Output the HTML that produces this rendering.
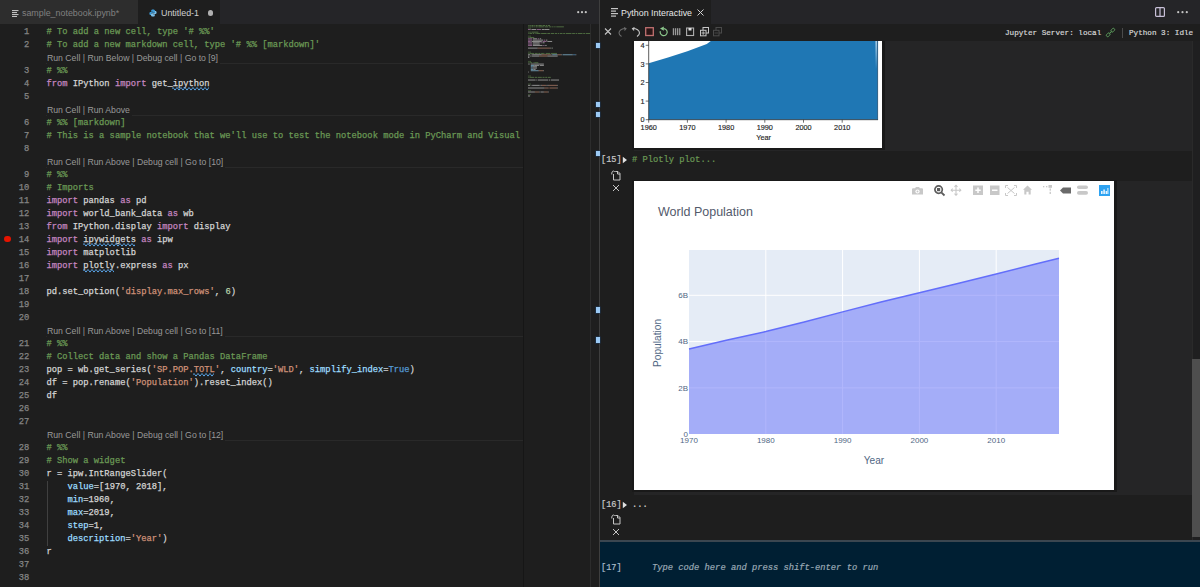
<!DOCTYPE html>
<html><head><meta charset="utf-8">
<style>
*{margin:0;padding:0;box-sizing:border-box}
html,body{width:1200px;height:587px;overflow:hidden;background:#1e1e1e;font-family:"Liberation Sans",sans-serif}
.abs{position:absolute}
.mono{font-family:"Liberation Mono",monospace;-webkit-text-stroke:0.2px currentColor}
/* left editor */
#ltabs{left:0;top:0;width:600px;height:24px;background:#252528}
#tab1{left:0;top:0;width:138px;height:24px;background:#2d2d2d}
#tab2{left:138px;top:0;width:82px;height:24px;background:#1e1e1e}
.tabtxt{font-size:8.9px;line-height:26px;white-space:nowrap}
#editor{left:0;top:24px;width:599px;height:563px;background:#1e1e1e}
.ln{position:absolute;left:0;width:29.2px;text-align:right;color:#858585;font-family:"Liberation Mono",monospace;font-size:8.77px;line-height:13px;height:13px;-webkit-text-stroke:0.25px currentColor}
.cl{position:absolute;left:46.5px;white-space:pre;color:#d4d4d4;font-family:"Liberation Mono",monospace;font-size:8.77px;line-height:13px;height:13px;-webkit-text-stroke:0.25px currentColor}
.lens{position:absolute;left:47px;background:#1e1e1e;padding-right:2px;white-space:pre;color:#999;font-size:8.7px;line-height:13px;height:13px}
.sep{position:absolute;left:46px;width:477px;height:1px;background:#292929}
.c{color:#6a9955}.k{color:#c586c0}.s{color:#ce9178}.n{color:#b5cea8}.p{color:#9cdcfe}.b{color:#569cd6}
/* right */
#rtabs{left:600px;top:0;width:600px;height:24px;background:#252528}
#rtab{left:600px;top:0;width:111px;height:24px;background:#1e1e1e}
#rtool{left:600px;top:24px;width:600px;height:17px;background:#1e1e1e}
#divider{left:599px;top:0;width:1px;height:587px;background:#3e3e3e}
</style></head><body>
<!-- LEFT TAB BAR -->
<div id="ltabs" class="abs"></div>
<div id="tab1" class="abs">
  <svg class="abs" style="left:12px;top:9.5px" width="7" height="7" viewBox="0 0 7 7"><g fill="#c0c0c0"><rect x="0" y="0" width="6.5" height="1.1"/><rect x="0" y="2" width="5" height="1.1"/><rect x="0" y="4" width="6.5" height="1.1"/><rect x="0" y="6" width="5" height="1"/></g></svg>
  <div class="abs tabtxt" style="left:22px;top:0;color:#808080">sample_notebook.ipynb*</div>
</div>
<div id="tab2" class="abs">
  <svg class="abs" style="left:11px;top:9px" width="8" height="8" viewBox="0 0 9 10"><path d="M4.5 0.5 C2.5 0.5 2.2 1.3 2.2 2.2 V3.3 H4.6 V3.8 H1.3 C0.4 3.8 0 4.6 0 5.6 C0 6.8 0.5 7.5 1.3 7.5 H2.2 V6.4 C2.2 5.5 2.9 4.8 3.8 4.8 H5.8 C6.5 4.8 7 4.3 7 3.6 V2.2 C7 1.3 6.3 0.5 4.5 0.5Z" fill="#3c9ad6"/><path d="M4.5 9.5 C6.5 9.5 6.8 8.7 6.8 7.8 V6.7 H4.4 V6.2 H7.7 C8.6 6.2 9 5.4 9 4.4 C9 3.2 8.5 2.5 7.7 2.5 H6.8 V3.6 C6.8 4.5 6.1 5.2 5.2 5.2 H3.2 C2.5 5.2 2 5.7 2 6.4 V7.8 C2 8.7 2.7 9.5 4.5 9.5Z" fill="#7ec0e8"/></svg>
  <div class="abs tabtxt" style="left:23px;top:0;color:#cfcfcf">Untitled-1</div>
  <div class="abs" style="left:69.5px;top:10px;width:5.5px;height:5.5px;border-radius:50%;background:#b0b0b0"></div>
</div>
<div class="abs" style="left:577px;top:11px;width:10px;height:2px;">
  <svg width="10" height="3" style="position:absolute;top:0"><circle cx="1.2" cy="1.2" r="1.1" fill="#c5c5c5"/><circle cx="5" cy="1.2" r="1.1" fill="#c5c5c5"/><circle cx="8.8" cy="1.2" r="1.1" fill="#c5c5c5"/></svg>
</div>

<!-- EDITOR -->
<div id="editor" class="abs">
<div class="ln" style="top:2px">1</div>
<div class="cl" style="top:2px"><span class="c"># To add a new cell, type '# %%'</span></div>
<div class="ln" style="top:15px">2</div>
<div class="cl" style="top:15px"><span class="c"># To add a new markdown cell, type '# %% [markdown]'</span></div>
<div class="sep" style="top:39px"></div>
<div class="lens" style="top:28px">Run Cell | Run Below | Debug cell | Go to [9]</div>
<div class="ln" style="top:41px">3</div>
<div class="cl" style="top:41px"><span class="c"># %%</span></div>
<div class="ln" style="top:54px">4</div>
<div class="cl" style="top:54px"><span class="k">from</span> IPython <span class="k">import</span> get_ipython</div>
<svg class="abs" style="left:172.2px;top:62.5px" width="36.8" height="4" viewBox="0 0 36.8 4"><path d="M0 1.8 Q1.0 -0.8 2.0 1.8 T4.0 1.8 Q5.0 -0.8 6.0 1.8 T8.0 1.8 Q9.0 -0.8 10.0 1.8 T12.0 1.8 Q13.0 -0.8 14.0 1.8 T16.0 1.8 Q17.0 -0.8 18.0 1.8 T20.0 1.8 Q21.0 -0.8 22.0 1.8 T24.0 1.8 Q25.0 -0.8 26.0 1.8 T28.0 1.8 Q29.0 -0.8 30.0 1.8 T32.0 1.8 Q33.0 -0.8 34.0 1.8 T36.0 1.8 Q37.0 -0.8 38.0 1.8 T40.0 1.8" stroke="#5aa5e8" stroke-width="1" fill="none"/></svg>
<div class="ln" style="top:67px">5</div>
<div class="cl" style="top:67px"></div>
<div class="sep" style="top:91px"></div>
<div class="lens" style="top:80px">Run Cell | Run Above</div>
<div class="ln" style="top:93px">6</div>
<div class="cl" style="top:93px"><span class="c"># %% [markdown]</span></div>
<div class="ln" style="top:106px">7</div>
<div class="cl" style="top:106px"><span class="c"># This is a sample notebook that we'll use to test the notebook mode in PyCharm and Visual</span></div>
<div class="ln" style="top:119px">8</div>
<div class="cl" style="top:119px"></div>
<div class="sep" style="top:143px"></div>
<div class="lens" style="top:132px">Run Cell | Run Above | Debug cell | Go to [10]</div>
<div class="ln" style="top:145px">9</div>
<div class="cl" style="top:145px"><span class="c"># %%</span></div>
<div class="ln" style="top:158px">10</div>
<div class="cl" style="top:158px"><span class="c"># Imports</span></div>
<div class="ln" style="top:171px">11</div>
<div class="cl" style="top:171px"><span class="k">import</span> pandas <span class="k">as</span> pd</div>
<div class="ln" style="top:184px">12</div>
<div class="cl" style="top:184px"><span class="k">import</span> world_bank_data <span class="k">as</span> wb</div>
<div class="ln" style="top:197px">13</div>
<div class="cl" style="top:197px"><span class="k">from</span> IPython.display <span class="k">import</span> display</div>
<div class="ln" style="top:210px">14</div>
<div class="cl" style="top:210px"><span class="k">import</span> ipywidgets <span class="k">as</span> ipw</div>
<svg class="abs" style="left:82.8px;top:218.5px" width="52.6" height="4" viewBox="0 0 52.6 4"><path d="M0 1.8 Q1.0 -0.8 2.0 1.8 T4.0 1.8 Q5.0 -0.8 6.0 1.8 T8.0 1.8 Q9.0 -0.8 10.0 1.8 T12.0 1.8 Q13.0 -0.8 14.0 1.8 T16.0 1.8 Q17.0 -0.8 18.0 1.8 T20.0 1.8 Q21.0 -0.8 22.0 1.8 T24.0 1.8 Q25.0 -0.8 26.0 1.8 T28.0 1.8 Q29.0 -0.8 30.0 1.8 T32.0 1.8 Q33.0 -0.8 34.0 1.8 T36.0 1.8 Q37.0 -0.8 38.0 1.8 T40.0 1.8 Q41.0 -0.8 42.0 1.8 T44.0 1.8 Q45.0 -0.8 46.0 1.8 T48.0 1.8 Q49.0 -0.8 50.0 1.8 T52.0 1.8 Q53.0 -0.8 54.0 1.8 T56.0 1.8" stroke="#5aa5e8" stroke-width="1" fill="none"/></svg>
<div class="ln" style="top:223px">15</div>
<div class="cl" style="top:223px"><span class="k">import</span> matplotlib</div>
<div class="ln" style="top:236px">16</div>
<div class="cl" style="top:236px"><span class="k">import</span> plotly.express <span class="k">as</span> px</div>
<svg class="abs" style="left:82.8px;top:244.5px" width="31.6" height="4" viewBox="0 0 31.6 4"><path d="M0 1.8 Q1.0 -0.8 2.0 1.8 T4.0 1.8 Q5.0 -0.8 6.0 1.8 T8.0 1.8 Q9.0 -0.8 10.0 1.8 T12.0 1.8 Q13.0 -0.8 14.0 1.8 T16.0 1.8 Q17.0 -0.8 18.0 1.8 T20.0 1.8 Q21.0 -0.8 22.0 1.8 T24.0 1.8 Q25.0 -0.8 26.0 1.8 T28.0 1.8 Q29.0 -0.8 30.0 1.8 T32.0 1.8" stroke="#5aa5e8" stroke-width="1" fill="none"/></svg>
<div class="ln" style="top:249px">17</div>
<div class="cl" style="top:249px"></div>
<div class="ln" style="top:262px">18</div>
<div class="cl" style="top:262px">pd.set_option(<span class="s">'display.max_rows'</span>, <span class="n">6</span>)</div>
<div class="ln" style="top:275px">19</div>
<div class="cl" style="top:275px"></div>
<div class="ln" style="top:288px">20</div>
<div class="cl" style="top:288px"></div>
<div class="sep" style="top:312px"></div>
<div class="lens" style="top:301px">Run Cell | Run Above | Debug cell | Go to [11]</div>
<div class="ln" style="top:314px">21</div>
<div class="cl" style="top:314px"><span class="c"># %%</span></div>
<div class="ln" style="top:327px">22</div>
<div class="cl" style="top:327px"><span class="c"># Collect data and show a Pandas DataFrame</span></div>
<div class="ln" style="top:340px">23</div>
<div class="cl" style="top:340px">pop = wb.get_series(<span class="s">'SP.POP.</span><span class="s">TOTL</span><span class="s">'</span>, <span class="p">country</span>=<span class="s">'WLD'</span>, <span class="p">simplify_index</span>=<span class="b">True</span>)</div>
<svg class="abs" style="left:193.3px;top:348.5px" width="21.0" height="4" viewBox="0 0 21.0 4"><path d="M0 1.8 Q1.0 -0.8 2.0 1.8 T4.0 1.8 Q5.0 -0.8 6.0 1.8 T8.0 1.8 Q9.0 -0.8 10.0 1.8 T12.0 1.8 Q13.0 -0.8 14.0 1.8 T16.0 1.8 Q17.0 -0.8 18.0 1.8 T20.0 1.8 Q21.0 -0.8 22.0 1.8 T24.0 1.8" stroke="#5aa5e8" stroke-width="1" fill="none"/></svg>
<div class="ln" style="top:353px">24</div>
<div class="cl" style="top:353px">df = pop.rename(<span class="s">'Population'</span>).reset_index()</div>
<div class="ln" style="top:366px">25</div>
<div class="cl" style="top:366px">df</div>
<div class="ln" style="top:379px">26</div>
<div class="cl" style="top:379px"></div>
<div class="ln" style="top:392px">27</div>
<div class="cl" style="top:392px"></div>
<div class="sep" style="top:416px"></div>
<div class="lens" style="top:405px">Run Cell | Run Above | Debug cell | Go to [12]</div>
<div class="ln" style="top:418px">28</div>
<div class="cl" style="top:418px"><span class="c"># %%</span></div>
<div class="ln" style="top:431px">29</div>
<div class="cl" style="top:431px"><span class="c"># Show a widget</span></div>
<div class="ln" style="top:444px">30</div>
<div class="cl" style="top:444px">r = ipw.IntRangeSlider(</div>
<div class="ln" style="top:457px">31</div>
<div class="cl" style="top:457px">    <span class="p">value</span>=[1970, 2018],</div>
<div class="ln" style="top:470px">32</div>
<div class="cl" style="top:470px">    <span class="p">min</span>=1960,</div>
<div class="ln" style="top:483px">33</div>
<div class="cl" style="top:483px">    <span class="p">max</span>=2019,</div>
<div class="ln" style="top:496px">34</div>
<div class="cl" style="top:496px">    <span class="p">step</span>=1,</div>
<div class="ln" style="top:509px">35</div>
<div class="cl" style="top:509px">    <span class="p">description</span>=<span class="s">'Year'</span>)</div>
<div class="ln" style="top:522px">36</div>
<div class="cl" style="top:522px">r</div>
<div class="ln" style="top:535px">37</div>
<div class="cl" style="top:535px"></div>
<div class="ln" style="top:548px">38</div>
<div class="cl" style="top:548px"></div>
<div class="abs" style="left:4px;top:211.5px;width:6.5px;height:6.5px;border-radius:50%;background:#e51400"></div>
<div class="abs" style="left:47px;top:457px;width:1px;height:65px;background:#404040"></div>
</div>

<div id="divider" class="abs"></div>

<!-- RIGHT -->
<div id="rtabs" class="abs"></div>
<div id="rtab" class="abs"></div>
<div id="rtool" class="abs"></div>

<div class="abs" style="left:523px;top:24px;width:1px;height:563px;background:#161616"></div>
<div class="abs" style="left:590px;top:24px;width:1px;height:563px;background:#2c2c2c"></div>
<svg class="abs" style="left:528px;top:24px" width="63" height="90" opacity="0.62">
<rect x="0.00" y="1.00" width="0.69" height="1" fill="#6a9955"/>
<rect x="1.38" y="1.00" width="1.38" height="1" fill="#6a9955"/>
<rect x="3.45" y="1.00" width="2.07" height="1" fill="#6a9955"/>
<rect x="6.21" y="1.00" width="0.69" height="1" fill="#6a9955"/>
<rect x="7.59" y="1.00" width="2.07" height="1" fill="#6a9955"/>
<rect x="10.35" y="1.00" width="3.45" height="1" fill="#6a9955"/>
<rect x="14.49" y="1.00" width="2.76" height="1" fill="#6a9955"/>
<rect x="17.94" y="1.00" width="1.38" height="1" fill="#6a9955"/>
<rect x="20.01" y="1.00" width="2.07" height="1" fill="#6a9955"/>
<rect x="0.00" y="2.33" width="0.69" height="1" fill="#6a9955"/>
<rect x="1.38" y="2.33" width="1.38" height="1" fill="#6a9955"/>
<rect x="3.45" y="2.33" width="2.07" height="1" fill="#6a9955"/>
<rect x="6.21" y="2.33" width="0.69" height="1" fill="#6a9955"/>
<rect x="7.59" y="2.33" width="2.07" height="1" fill="#6a9955"/>
<rect x="10.35" y="2.33" width="5.52" height="1" fill="#6a9955"/>
<rect x="16.56" y="2.33" width="3.45" height="1" fill="#6a9955"/>
<rect x="20.70" y="2.33" width="2.76" height="1" fill="#6a9955"/>
<rect x="24.15" y="2.33" width="1.38" height="1" fill="#6a9955"/>
<rect x="26.22" y="2.33" width="1.38" height="1" fill="#6a9955"/>
<rect x="28.29" y="2.33" width="7.59" height="1" fill="#6a9955"/>
<rect x="0.00" y="3.66" width="0.69" height="1" fill="#6a9955"/>
<rect x="1.38" y="3.66" width="1.38" height="1" fill="#6a9955"/>
<rect x="0.00" y="4.99" width="2.76" height="1" fill="#c586c0"/>
<rect x="3.45" y="4.99" width="4.83" height="1" fill="#d4d4d4"/>
<rect x="8.97" y="4.99" width="4.14" height="1" fill="#c586c0"/>
<rect x="13.80" y="4.99" width="2.76" height="1" fill="#d4d4d4"/>
<rect x="16.56" y="4.99" width="4.83" height="1" fill="#d4d4d4"/>
<rect x="0.00" y="7.65" width="0.69" height="1" fill="#6a9955"/>
<rect x="1.38" y="7.65" width="1.38" height="1" fill="#6a9955"/>
<rect x="3.45" y="7.65" width="6.90" height="1" fill="#6a9955"/>
<rect x="0.00" y="8.98" width="0.69" height="1" fill="#6a9955"/>
<rect x="1.38" y="8.98" width="2.76" height="1" fill="#6a9955"/>
<rect x="4.83" y="8.98" width="1.38" height="1" fill="#6a9955"/>
<rect x="6.90" y="8.98" width="0.69" height="1" fill="#6a9955"/>
<rect x="8.28" y="8.98" width="4.14" height="1" fill="#6a9955"/>
<rect x="13.11" y="8.98" width="5.52" height="1" fill="#6a9955"/>
<rect x="19.32" y="8.98" width="2.76" height="1" fill="#6a9955"/>
<rect x="22.77" y="8.98" width="3.45" height="1" fill="#6a9955"/>
<rect x="26.91" y="8.98" width="2.07" height="1" fill="#6a9955"/>
<rect x="29.67" y="8.98" width="1.38" height="1" fill="#6a9955"/>
<rect x="31.74" y="8.98" width="2.76" height="1" fill="#6a9955"/>
<rect x="35.19" y="8.98" width="2.07" height="1" fill="#6a9955"/>
<rect x="37.95" y="8.98" width="5.52" height="1" fill="#6a9955"/>
<rect x="44.16" y="8.98" width="2.76" height="1" fill="#6a9955"/>
<rect x="47.61" y="8.98" width="1.38" height="1" fill="#6a9955"/>
<rect x="49.68" y="8.98" width="4.83" height="1" fill="#6a9955"/>
<rect x="55.20" y="8.98" width="2.07" height="1" fill="#6a9955"/>
<rect x="57.96" y="8.98" width="4.14" height="1" fill="#6a9955"/>
<rect x="0.00" y="11.64" width="0.69" height="1" fill="#6a9955"/>
<rect x="1.38" y="11.64" width="1.38" height="1" fill="#6a9955"/>
<rect x="0.00" y="12.97" width="0.69" height="1" fill="#6a9955"/>
<rect x="1.38" y="12.97" width="4.83" height="1" fill="#6a9955"/>
<rect x="0.00" y="14.30" width="4.14" height="1" fill="#c586c0"/>
<rect x="4.83" y="14.30" width="4.14" height="1" fill="#d4d4d4"/>
<rect x="9.66" y="14.30" width="1.38" height="1" fill="#c586c0"/>
<rect x="11.73" y="14.30" width="1.38" height="1" fill="#d4d4d4"/>
<rect x="0.00" y="15.63" width="4.14" height="1" fill="#c586c0"/>
<rect x="4.83" y="15.63" width="10.35" height="1" fill="#d4d4d4"/>
<rect x="15.87" y="15.63" width="1.38" height="1" fill="#c586c0"/>
<rect x="17.94" y="15.63" width="1.38" height="1" fill="#d4d4d4"/>
<rect x="0.00" y="16.96" width="2.76" height="1" fill="#c586c0"/>
<rect x="3.45" y="16.96" width="10.35" height="1" fill="#d4d4d4"/>
<rect x="14.49" y="16.96" width="4.14" height="1" fill="#c586c0"/>
<rect x="19.32" y="16.96" width="4.83" height="1" fill="#d4d4d4"/>
<rect x="0.00" y="18.29" width="4.14" height="1" fill="#c586c0"/>
<rect x="4.83" y="18.29" width="6.90" height="1" fill="#d4d4d4"/>
<rect x="12.42" y="18.29" width="1.38" height="1" fill="#c586c0"/>
<rect x="14.49" y="18.29" width="2.07" height="1" fill="#d4d4d4"/>
<rect x="0.00" y="19.62" width="4.14" height="1" fill="#c586c0"/>
<rect x="4.83" y="19.62" width="6.90" height="1" fill="#d4d4d4"/>
<rect x="0.00" y="20.95" width="4.14" height="1" fill="#c586c0"/>
<rect x="4.83" y="20.95" width="4.14" height="1" fill="#d4d4d4"/>
<rect x="8.97" y="20.95" width="5.52" height="1" fill="#d4d4d4"/>
<rect x="15.18" y="20.95" width="1.38" height="1" fill="#c586c0"/>
<rect x="17.25" y="20.95" width="1.38" height="1" fill="#d4d4d4"/>
<rect x="0.00" y="23.61" width="9.66" height="1" fill="#d4d4d4"/>
<rect x="9.66" y="23.61" width="12.42" height="1" fill="#ce9178"/>
<rect x="22.08" y="23.61" width="0.69" height="1" fill="#d4d4d4"/>
<rect x="23.46" y="23.61" width="0.69" height="1" fill="#b5cea8"/>
<rect x="24.15" y="23.61" width="0.69" height="1" fill="#d4d4d4"/>
<rect x="0.00" y="27.60" width="0.69" height="1" fill="#6a9955"/>
<rect x="1.38" y="27.60" width="1.38" height="1" fill="#6a9955"/>
<rect x="0.00" y="28.93" width="0.69" height="1" fill="#6a9955"/>
<rect x="1.38" y="28.93" width="4.83" height="1" fill="#6a9955"/>
<rect x="6.90" y="28.93" width="2.76" height="1" fill="#6a9955"/>
<rect x="10.35" y="28.93" width="2.07" height="1" fill="#6a9955"/>
<rect x="13.11" y="28.93" width="2.76" height="1" fill="#6a9955"/>
<rect x="16.56" y="28.93" width="0.69" height="1" fill="#6a9955"/>
<rect x="17.94" y="28.93" width="4.14" height="1" fill="#6a9955"/>
<rect x="22.77" y="28.93" width="6.21" height="1" fill="#6a9955"/>
<rect x="0.00" y="30.26" width="2.07" height="1" fill="#d4d4d4"/>
<rect x="2.76" y="30.26" width="0.69" height="1" fill="#d4d4d4"/>
<rect x="4.14" y="30.26" width="9.66" height="1" fill="#d4d4d4"/>
<rect x="13.80" y="30.26" width="5.52" height="1" fill="#ce9178"/>
<rect x="19.32" y="30.26" width="2.76" height="1" fill="#ce9178"/>
<rect x="22.08" y="30.26" width="0.69" height="1" fill="#ce9178"/>
<rect x="22.77" y="30.26" width="0.69" height="1" fill="#d4d4d4"/>
<rect x="24.15" y="30.26" width="4.83" height="1" fill="#9cdcfe"/>
<rect x="28.98" y="30.26" width="0.69" height="1" fill="#d4d4d4"/>
<rect x="29.67" y="30.26" width="3.45" height="1" fill="#ce9178"/>
<rect x="33.12" y="30.26" width="0.69" height="1" fill="#d4d4d4"/>
<rect x="34.50" y="30.26" width="9.66" height="1" fill="#9cdcfe"/>
<rect x="44.16" y="30.26" width="0.69" height="1" fill="#d4d4d4"/>
<rect x="44.85" y="30.26" width="2.76" height="1" fill="#569cd6"/>
<rect x="47.61" y="30.26" width="0.69" height="1" fill="#d4d4d4"/>
<rect x="0.00" y="31.59" width="1.38" height="1" fill="#d4d4d4"/>
<rect x="2.07" y="31.59" width="0.69" height="1" fill="#d4d4d4"/>
<rect x="3.45" y="31.59" width="7.59" height="1" fill="#d4d4d4"/>
<rect x="11.04" y="31.59" width="8.28" height="1" fill="#ce9178"/>
<rect x="19.32" y="31.59" width="10.35" height="1" fill="#d4d4d4"/>
<rect x="0.00" y="32.92" width="1.38" height="1" fill="#d4d4d4"/>
<rect x="0.00" y="36.91" width="0.69" height="1" fill="#6a9955"/>
<rect x="1.38" y="36.91" width="1.38" height="1" fill="#6a9955"/>
<rect x="0.00" y="38.24" width="0.69" height="1" fill="#6a9955"/>
<rect x="1.38" y="38.24" width="2.76" height="1" fill="#6a9955"/>
<rect x="4.83" y="38.24" width="0.69" height="1" fill="#6a9955"/>
<rect x="6.21" y="38.24" width="4.14" height="1" fill="#6a9955"/>
<rect x="0.00" y="39.57" width="0.69" height="1" fill="#d4d4d4"/>
<rect x="1.38" y="39.57" width="0.69" height="1" fill="#d4d4d4"/>
<rect x="2.76" y="39.57" width="13.11" height="1" fill="#d4d4d4"/>
<rect x="2.76" y="40.90" width="3.45" height="1" fill="#9cdcfe"/>
<rect x="6.21" y="40.90" width="4.83" height="1" fill="#d4d4d4"/>
<rect x="11.73" y="40.90" width="4.14" height="1" fill="#d4d4d4"/>
<rect x="2.76" y="42.23" width="2.07" height="1" fill="#9cdcfe"/>
<rect x="4.83" y="42.23" width="4.14" height="1" fill="#d4d4d4"/>
<rect x="2.76" y="43.56" width="2.07" height="1" fill="#9cdcfe"/>
<rect x="4.83" y="43.56" width="4.14" height="1" fill="#d4d4d4"/>
<rect x="2.76" y="44.89" width="2.76" height="1" fill="#9cdcfe"/>
<rect x="5.52" y="44.89" width="2.07" height="1" fill="#d4d4d4"/>
<rect x="2.76" y="46.22" width="7.59" height="1" fill="#9cdcfe"/>
<rect x="10.35" y="46.22" width="0.69" height="1" fill="#d4d4d4"/>
<rect x="11.04" y="46.22" width="4.14" height="1" fill="#ce9178"/>
<rect x="15.18" y="46.22" width="0.69" height="1" fill="#d4d4d4"/>
<rect x="0.00" y="47.55" width="0.69" height="1" fill="#d4d4d4"/>
<rect x="0.00" y="51.54" width="0.69" height="1" fill="#6a9955"/>
<rect x="1.38" y="51.54" width="1.38" height="1" fill="#6a9955"/>
<rect x="0.00" y="52.87" width="0.69" height="1" fill="#6a9955"/>
<rect x="1.38" y="52.87" width="4.83" height="1" fill="#6a9955"/>
<rect x="6.90" y="52.87" width="2.07" height="1" fill="#6a9955"/>
<rect x="9.66" y="52.87" width="4.14" height="1" fill="#6a9955"/>
<rect x="14.49" y="52.87" width="2.07" height="1" fill="#6a9955"/>
<rect x="17.25" y="52.87" width="2.07" height="1" fill="#6a9955"/>
<rect x="20.01" y="52.87" width="2.76" height="1" fill="#6a9955"/>
<rect x="0.00" y="55.53" width="7.59" height="1" fill="#d4d4d4"/>
<rect x="8.28" y="55.53" width="0.69" height="1" fill="#d4d4d4"/>
<rect x="9.66" y="55.53" width="10.35" height="1" fill="#d4d4d4"/>
<rect x="20.70" y="55.53" width="1.38" height="1" fill="#d4d4d4"/>
<rect x="22.77" y="55.53" width="8.28" height="1" fill="#d4d4d4"/>
<rect x="0.00" y="59.52" width="0.69" height="1" fill="#6a9955"/>
<rect x="1.38" y="59.52" width="1.38" height="1" fill="#6a9955"/>
<rect x="0.00" y="60.85" width="2.07" height="1" fill="#d4d4d4"/>
<rect x="2.76" y="60.85" width="0.69" height="1" fill="#d4d4d4"/>
<rect x="4.14" y="60.85" width="7.59" height="1" fill="#d4d4d4"/>
<rect x="12.42" y="60.85" width="1.38" height="1" fill="#d4d4d4"/>
<rect x="13.80" y="60.85" width="4.14" height="1" fill="#ce9178"/>
<rect x="17.94" y="60.85" width="0.69" height="1" fill="#d4d4d4"/>
<rect x="19.32" y="60.85" width="1.38" height="1" fill="#d4d4d4"/>
<rect x="20.70" y="60.85" width="8.28" height="1" fill="#ce9178"/>
<rect x="28.98" y="60.85" width="0.69" height="1" fill="#d4d4d4"/>
<rect x="0.00" y="63.51" width="16.56" height="1" fill="#d4d4d4"/>
<rect x="16.56" y="63.51" width="4.14" height="1" fill="#ce9178"/>
<rect x="21.39" y="63.51" width="7.59" height="1" fill="#ce9178"/>
<rect x="28.98" y="63.51" width="0.69" height="1" fill="#d4d4d4"/>
<rect x="0.00" y="66.17" width="0.69" height="1" fill="#6a9955"/>
<rect x="1.38" y="66.17" width="1.38" height="1" fill="#6a9955"/>
<rect x="0.00" y="67.50" width="6.90" height="1" fill="#d4d4d4"/>
<rect x="6.90" y="67.50" width="4.14" height="1" fill="#ce9178"/>
<rect x="11.04" y="67.50" width="0.69" height="1" fill="#d4d4d4"/>
<rect x="12.42" y="67.50" width="3.45" height="1" fill="#d4d4d4"/>
<rect x="15.87" y="67.50" width="4.14" height="1" fill="#ce9178"/>
<rect x="20.01" y="67.50" width="0.69" height="1" fill="#d4d4d4"/>
<rect x="0.00" y="70.16" width="0.69" height="1" fill="#6a9955"/>
<rect x="1.38" y="70.16" width="1.38" height="1" fill="#6a9955"/>
<rect x="0.00" y="71.49" width="2.07" height="1" fill="#d4d4d4"/>
</svg>
<div class="abs" style="left:596px;top:43px;width:3.5px;height:5px;background:#9ccaf4;box-shadow:0 0 0 0.5px #1d3b5c"></div><div class="abs" style="left:596px;top:102px;width:3.5px;height:5px;background:#9ccaf4;box-shadow:0 0 0 0.5px #1d3b5c"></div><div class="abs" style="left:596px;top:112px;width:3.5px;height:5px;background:#9ccaf4;box-shadow:0 0 0 0.5px #1d3b5c"></div><div class="abs" style="left:596px;top:151px;width:3.5px;height:5px;background:#9ccaf4;box-shadow:0 0 0 0.5px #1d3b5c"></div><div class="abs" style="left:596px;top:307px;width:3.5px;height:6px;background:#9ccaf4;box-shadow:0 0 0 0.5px #1d3b5c"></div><div class="abs" style="left:596px;top:337px;width:3.5px;height:6px;background:#9ccaf4;box-shadow:0 0 0 0.5px #1d3b5c"></div>
<!-- right tab -->
<svg class="abs" style="left:611px;top:8px" width="8" height="9" viewBox="0 0 8 9"><g fill="#c5c5c5"><rect x="0" y="0" width="7" height="1.2"/><rect x="0" y="2.5" width="5" height="1.2"/><rect x="0" y="5" width="7" height="1.2"/><rect x="0" y="7.5" width="5" height="1.2"/></g></svg>
<div class="abs tabtxt" style="left:621px;top:0;color:#e6e6e6">Python Interactive</div>
<svg class="abs" style="left:697px;top:9px" width="7" height="7" viewBox="0 0 7 7"><path d="M0.5 0.5 L6.5 6.5 M6.5 0.5 L0.5 6.5" stroke="#d0d0d0" stroke-width="1"/></svg>
<!-- split + more -->
<svg class="abs" style="left:1154.5px;top:7px" width="10" height="10" viewBox="0 0 10 10"><rect x="0.6" y="0.6" width="8.8" height="8.8" rx="1" fill="none" stroke="#c8c0d8" stroke-width="1.2"/><line x1="5" y1="0.6" x2="5" y2="9.4" stroke="#c8c0d8" stroke-width="1.2"/></svg>
<svg class="abs" style="left:1177px;top:11px" width="12" height="3"><circle cx="1.2" cy="1.2" r="1.1" fill="#c5c5c5"/><circle cx="5.5" cy="1.2" r="1.1" fill="#c5c5c5"/><circle cx="9.8" cy="1.2" r="1.1" fill="#c5c5c5"/></svg>
<!-- toolbar icons -->
<svg class="abs" style="left:600px;top:24px" width="130" height="17" viewBox="0 0 130 17">
 <path d="M5 4.5 L11 10.5 M11 4.5 L5 10.5" stroke="#c5c5c5" stroke-width="1.1" fill="none"/>
 <path d="M25.5 4.5 C22 4.5 19 6.5 19 9 C19 10.5 20 11.5 21.5 12.5 M24 3.5 L26 4.6 L24.5 6.5" stroke="#6a6a6a" stroke-width="1.1" fill="none"/>
 <path d="M33 4.5 C36.5 4.5 39.5 6.5 39.5 9 C39.5 10.5 38.5 11.5 37 12.5 M34.5 3.5 L32.5 4.6 L34 6.5" stroke="#c5c5c5" stroke-width="1.1" fill="none"/>
 <rect x="45.7" y="3.7" width="7.6" height="7.8" fill="#2a1616" stroke="#c07070" stroke-width="1.3"/>
 <path d="M63.8 4.6 A3.5 3.5 0 1 1 60.3 7.2" stroke="#8cc88c" stroke-width="1.2" fill="none"/>
 <path d="M60 4.6 L63.8 2.4 L63.8 6.8 Z" fill="#8cc88c"/>
 <g fill="#9a9a9a"><rect x="72.8" y="4.2" width="1.3" height="7"/><rect x="74.9" y="4.2" width="1.3" height="7"/><rect x="77" y="4.2" width="1.3" height="7"/><rect x="79.1" y="4.2" width="1.3" height="7"/></g>
 <rect x="86.6" y="4" width="7" height="7.5" fill="#1e1e1e" stroke="#b0b0b0" stroke-width="1.1"/><rect x="88.5" y="4" width="3" height="2.5" fill="#e0e0e0"/>
 <rect x="103" y="3.5" width="5.5" height="5.5" fill="#1e1e1e" stroke="#c5c5c5" stroke-width="1"/><rect x="100.5" y="6.3" width="5.5" height="5.5" fill="#1e1e1e" stroke="#c5c5c5" stroke-width="1"/><path d="M103.2 7.3 V10.8 M101.5 9 H105" stroke="#c5c5c5" stroke-width="0.9"/>
 <rect x="116" y="3.5" width="5.5" height="5.5" fill="none" stroke="#4a4a4a" stroke-width="1"/><rect x="113.5" y="6.3" width="5.5" height="5.5" fill="#1e1e1e" stroke="#4a4a4a" stroke-width="1"/><path d="M114.5 9 H118" stroke="#4a4a4a" stroke-width="0.9"/>
</svg>
<div class="abs mono" style="left:1005px;top:25px;height:17px;line-height:17px;font-size:7.65px;color:#d4d4d4;white-space:pre">Jupyter Server: local</div>
<svg class="abs" style="left:1105px;top:27px" width="11" height="11" viewBox="0 0 11 11"><g stroke="#5fa35f" stroke-width="0.9" fill="none"><rect x="-1.3" y="-3.2" width="2.6" height="4.2" rx="1.3" transform="translate(7 4) rotate(45)"/><rect x="-1.3" y="-1" width="2.6" height="4.2" rx="1.3" transform="translate(4 7) rotate(45)"/><path d="M4.6 6.4 L6.4 4.6"/></g></svg>
<div class="abs" style="left:1122px;top:28px;width:1px;height:10px;background:#4a4a4a"></div>
<div class="abs mono" style="left:1129px;top:25px;height:17px;line-height:17px;font-size:7.65px;color:#d4d4d4;white-space:pre">Python 3: Idle</div>

<!-- output 1 bg -->
<div class="abs" style="left:634px;top:41px;width:558px;height:110px;background:#252526"></div>
<!-- matplotlib -->
<div class="abs" style="left:632px;top:41px;width:253px;height:109px;background:#191919"></div>
<svg class="abs" style="left:634px;top:41px" width="248" height="107" viewBox="0 0 248 107">
 <rect x="0" y="0" width="248" height="107" fill="#fff"/>
 <path d="M14.7 22.3 L34.0 16.6 L53.4 10.3 L72.8 3.0 L76.8 0 L243.6 0 L243.6 78.7 L14.7 78.7 Z" fill="#1f77b4"/>
 <line x1="14.7" y1="0" x2="14.7" y2="79" stroke="#333" stroke-width="0.8"/>
 <line x1="14.7" y1="78.7" x2="244" y2="78.7" stroke="#333" stroke-width="0.8"/>
 <defs><linearGradient id="lg" x1="0" y1="0" x2="0" y2="1"><stop offset="0" stop-color="#e8f2fa"/><stop offset="1" stop-color="#1f77b4"/></linearGradient></defs><rect x="241.6" y="0" width="1.1" height="28" fill="url(#lg)"/><line x1="243.6" y1="0" x2="243.6" y2="79" stroke="#1a4a70" stroke-width="0.8"/>
 <g stroke="#333" stroke-width="0.7">
  <line x1="11.7" y1="78.7" x2="14.7" y2="78.7"/><line x1="11.7" y1="60.1" x2="14.7" y2="60.1"/><line x1="11.7" y1="41.5" x2="14.7" y2="41.5"/><line x1="11.7" y1="22.9" x2="14.7" y2="22.9"/><line x1="11.7" y1="4.3" x2="14.7" y2="4.3"/>
  <line x1="14.7" y1="78.7" x2="14.7" y2="81.7"/><line x1="53.4" y1="78.7" x2="53.4" y2="81.7"/><line x1="92.1" y1="78.7" x2="92.1" y2="81.7"/><line x1="130.8" y1="78.7" x2="130.8" y2="81.7"/><line x1="169.5" y1="78.7" x2="169.5" y2="81.7"/><line x1="208.2" y1="78.7" x2="208.2" y2="81.7"/>
 </g>
 <g font-family="Liberation Sans" font-size="7.3" fill="#262626" text-anchor="end" stroke="#262626" stroke-width="0.15">
  <text x="10.5" y="81.3">0</text><text x="10.5" y="62.7">1</text><text x="10.5" y="44.1">2</text><text x="10.5" y="25.5">3</text><text x="10.5" y="6.9">4</text>
 </g>
 <g font-family="Liberation Sans" font-size="7.3" fill="#262626" text-anchor="middle" stroke="#262626" stroke-width="0.15">
  <text x="14.7" y="89">1960</text><text x="53.4" y="89">1970</text><text x="92.1" y="89">1980</text><text x="130.8" y="89">1990</text><text x="169.5" y="89">2000</text><text x="208.2" y="89">2010</text>
  <text x="129.6" y="98.6">Year</text>
 </g>
</svg>

<!-- cell 15 -->
<div class="abs mono" style="left:601px;top:152px;line-height:16px;font-size:8.6px;color:#c8c8c8">[15]</div>
<svg class="abs" style="left:622px;top:156px" width="6" height="8"><path d="M0.8 0.8 L5 4 L0.8 7.2Z" fill="#e0e0e0"/></svg>
<div class="abs mono" style="left:632px;top:152px;line-height:16px;font-size:8.77px;color:#6a9955;white-space:pre"># Plotly plot...</div>
<svg class="abs" style="left:610px;top:170px" width="12" height="11" viewBox="0 0 12 11"><path d="M3.5 4 V10 H10 V3.5 L8 1.5 H5.5 M2 3 A1.5 1.5 0 0 1 4.5 1.5 L5.5 1.5 M1.8 3 V4.5 M7.5 1.5 V4 H10" stroke="#c5c5c5" stroke-width="1" fill="none"/></svg>
<svg class="abs" style="left:612px;top:184px" width="8" height="8"><path d="M1 1 L7 7 M7 1 L1 7" stroke="#c5c5c5" stroke-width="1"/></svg>

<!-- output 2 bg -->
<div class="abs" style="left:634px;top:181px;width:558px;height:314px;background:#252526"></div>
<div class="abs" style="left:632px;top:180px;width:485px;height:312px;background:#191919"></div>
<svg class="abs" style="left:634px;top:181px" width="480" height="309" viewBox="0 0 480 309">
 <rect x="0" y="0" width="480" height="309" fill="#fff"/>
 <rect x="55" y="69" width="370" height="184" fill="#e5ecf6"/>
 <g stroke="#fff" stroke-width="1">
  <line x1="55" y1="114.3" x2="425" y2="114.3"/><line x1="55" y1="160.6" x2="425" y2="160.6"/><line x1="55" y1="206.9" x2="425" y2="206.9"/>
  <line x1="131.8" y1="69" x2="131.8" y2="253"/><line x1="208.6" y1="69" x2="208.6" y2="253"/><line x1="285.4" y1="69" x2="285.4" y2="253"/><line x1="362.2" y1="69" x2="362.2" y2="253"/>
 </g>
 <path d="M55.0 167.9 L93.4 158.9 L131.8 150.6 L170.2 141.1 L208.6 130.9 L247.0 121.0 L285.4 111.7 L323.8 102.5 L362.2 93.0 L400.6 83.3 L425 77.2 L425 253 L55 253 Z" fill="#636efa" fill-opacity="0.5"/>
 <path d="M55.0 167.9 L93.4 158.9 L131.8 150.6 L170.2 141.1 L208.6 130.9 L247.0 121.0 L285.4 111.7 L323.8 102.5 L362.2 93.0 L400.6 83.3 L425 77.2" stroke="#636efa" stroke-width="1.5" fill="none"/>
 <g font-family="Liberation Sans" font-size="8" fill="#506784" text-anchor="end">
  <text x="54" y="117">6B</text><text x="54" y="163.3">4B</text><text x="54" y="209.6">2B</text><text x="54" y="255.8">0</text>
 </g>
 <g font-family="Liberation Sans" font-size="8" fill="#506784" text-anchor="middle">
  <text x="55" y="262">1970</text><text x="131.8" y="262">1980</text><text x="208.6" y="262">1990</text><text x="285.4" y="262">2000</text><text x="362.2" y="262">2010</text>
 </g>
 <text x="240" y="282.5" font-family="Liberation Sans" font-size="10.1" fill="#506784" text-anchor="middle">Year</text>
 <text transform="translate(26.5 162) rotate(-90)" font-family="Liberation Sans" font-size="10.2" fill="#506784" text-anchor="middle">Population</text>
 
 <g transform="translate(278 6)" fill="#c8c8c8"><path d="M0 2.2 Q0 1.3 1 1.3 H3 L4 0 H7 L8 1.3 H10 Q11 1.3 11 2.2 V7.6 H0 Z"/><circle cx="5.5" cy="4.5" r="2.1" fill="#fff"/><circle cx="5.5" cy="4.5" r="1" fill="#c8c8c8"/></g>
 <g transform="translate(300 4)"><circle cx="4.6" cy="4.6" r="3.7" fill="none" stroke="#5c5c5c" stroke-width="1.7"/><rect x="3" y="3" width="3.2" height="3.2" fill="#5c5c5c"/><path d="M7.3 7.3 L10.5 10.5" stroke="#5c5c5c" stroke-width="1.8"/></g>
 <g transform="translate(317 4)" stroke="#c8c8c8" stroke-width="1.1" fill="none"><path d="M5 0.3 V10.2 M0.2 5.2 H9.8"/><path d="M3.5 1.8 L5 0.3 L6.5 1.8 M3.5 8.7 L5 10.2 L6.5 8.7 M1.7 3.7 L0.2 5.2 L1.7 6.7 M8.3 3.7 L9.8 5.2 L8.3 6.7"/></g>
 <g transform="translate(339 4.5)"><rect x="0" y="0" width="10" height="9.5" fill="#c8c8c8"/><path d="M5 2 V7.5 M2.3 4.75 H7.7" stroke="#fff" stroke-width="1.5"/></g>
 <g transform="translate(356 4.5)"><rect x="0" y="0" width="9.5" height="9.5" fill="#c8c8c8"/><path d="M2 4.75 H7.5" stroke="#fff" stroke-width="1.5"/></g>
 <g transform="translate(371 4)" stroke="#c8c8c8" stroke-width="1" fill="none"><path d="M0.5 3 V0.5 H3 M9 0.5 H11.5 V3 M11.5 8 V10.5 H9 M3 10.5 H0.5 V8"/><path d="M2.5 2.5 L9.5 8.5 M9.5 2.5 L2.5 8.5"/></g>
 <g transform="translate(389 4.5)" fill="#c8c8c8"><path d="M4.5 0 L9 4.3 H7.7 V9 H5.6 V6.3 H3.4 V9 H1.3 V4.3 H0 Z"/></g>
 <g transform="translate(409 4)" fill="#c8c8c8"><rect x="0" y="1" width="1.3" height="1.3"/><rect x="3" y="1" width="1.3" height="1.3"/><rect x="5.5" y="0" width="3.5" height="2.8"/><rect x="6.6" y="3.5" width="1.3" height="2.2"/><rect x="6.6" y="6.8" width="1.3" height="2.2"/></g>
 <g transform="translate(426 6.5)" fill="#6a6a6a"><path d="M0 3 L3 0 H11 V6 H3 Z"/></g>
 <g transform="translate(443 4.5)" fill="#c8c8c8"><rect x="0" y="0" width="11" height="3.6" rx="1.8"/><rect x="0" y="5.6" width="11" height="3.6" rx="1.8"/></g>
 <g transform="translate(465 4)"><rect x="0" y="0" width="11" height="11" fill="#2ea3f2"/><g fill="#e6f4ff"><rect x="2" y="6" width="1.6" height="3"/><rect x="4.3" y="4.5" width="1.6" height="4.5"/><rect x="6.6" y="6" width="1.6" height="3"/><rect x="8.4" y="3" width="1" height="6"/></g></g>
 <text x="24" y="35" font-family="Liberation Sans" font-size="12.5" fill="#535a6b">World Population</text>
</svg>


<!-- cell 16 -->
<div class="abs mono" style="left:601px;top:497px;line-height:16px;font-size:8.6px;color:#c8c8c8">[16]</div>
<svg class="abs" style="left:622px;top:501px" width="6" height="8"><path d="M0.8 0.8 L5 4 L0.8 7.2Z" fill="#e0e0e0"/></svg>
<div class="abs mono" style="left:632px;top:497px;line-height:16px;font-size:8.77px;color:#d4d4d4;white-space:pre">...</div>
<svg class="abs" style="left:610px;top:514px" width="12" height="11" viewBox="0 0 12 11"><path d="M3.5 4 V10 H10 V3.5 L8 1.5 H5.5 M2 3 A1.5 1.5 0 0 1 4.5 1.5 L5.5 1.5 M1.8 3 V4.5 M7.5 1.5 V4 H10" stroke="#c5c5c5" stroke-width="1" fill="none"/></svg>
<svg class="abs" style="left:612px;top:528px" width="8" height="8"><path d="M1 1 L7 7 M7 1 L1 7" stroke="#c5c5c5" stroke-width="1"/></svg>

<!-- input box -->
<div class="abs" style="left:600px;top:540px;width:600px;height:47px;background:#001f33;border-top:2px solid #3b4650"></div>
<div class="abs mono" style="left:601px;top:560px;line-height:16px;font-size:8.6px;color:#a9bccb">[17]</div>
<div class="abs mono" style="left:652px;top:560px;line-height:16px;font-size:8.77px;color:#9aa9b5;font-style:italic;white-space:pre">Type code here and press shift-enter to run</div>

<!-- scrollbar -->
<div class="abs" style="left:1192px;top:41px;width:8px;height:499px;background:#1f1f20;border-left:1px solid #2a2a2a"></div>
<div class="abs" style="left:1192px;top:359px;width:8px;height:178px;background:#4e4e4e"></div>

</body></html>
